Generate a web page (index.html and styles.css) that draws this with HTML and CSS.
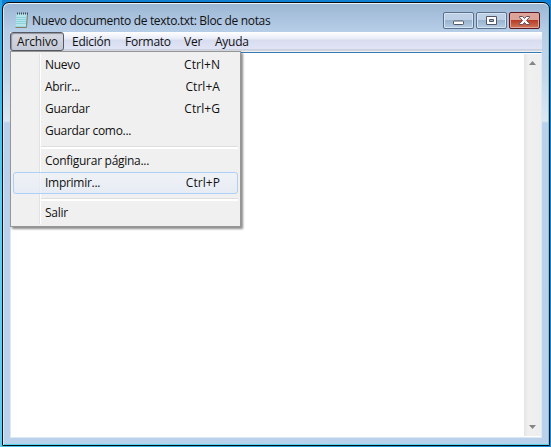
FILE: index.html
```
<!DOCTYPE html>
<html lang="es">
<head>
<meta charset="utf-8">
<title>Bloc de notas</title>
<link rel="stylesheet" href="styles.css">
</head>
<body>
<div class="window">
  <header class="titlebar">
    <svg class="icon" width="16" height="17" viewBox="0 0 16 17">
      <path d="M2.5 2H14L13 15.500H1.500Z" fill="#7fc4cf"/>
      <path d="M2.500 2H13L12 14.500H1.500Z" fill="#b4e5ec"/>
      <path d="M2.500 5.500H12.500M2.300 7.500H12.300M2.200 9.500H12.200M2 11.500H12" stroke="#83cbd7" stroke-width=".8"/>
      <path d="M13.500 2L12.500 14.500V15.500H1.500" fill="none" stroke="#8a8065"/>
      <path d="M3 1.500H14" stroke="#354d58" stroke-width="2" stroke-dasharray="1 1"/>
    </svg>
    <h1 class="title">Nuevo documento de texto.txt: Bloc de notas</h1>
    <div class="controls">
      <button class="control" aria-label="Minimizar"><svg width="29" height="15"><rect x="9.500" y="8" width="10" height="3.500" rx=".7" fill="#fff" stroke="#535666"/></svg></button>
      <button class="control" aria-label="Maximizar"><svg width="29" height="15"><path fill-rule="evenodd" d="M9.500 3.500h10v8h-10zM12.500 6.500v2h4v-2z" fill="#fff" stroke="#535666"/></svg></button>
      <button class="control close" aria-label="Cerrar"><svg width="29" height="15"><path d="M9.500 3.500h3.200l1.800 2 1.800-2h3.200v.8l-3 3.200 3 3.200v.8h-3.200l-1.800-2-1.800 2H9.500v-.8l3-3.200-3-3.200z" fill="#fff" stroke="#61505c"/></svg></button>
    </div>
  </header>
  <main class="client">
    <nav class="menubar">
      <span class="entry open">Archivo</span>
      <span class="entry edit">Edición</span>
      <span class="entry format">Formato</span>
      <span class="entry view">Ver</span>
      <span class="entry help">Ayuda</span>
    </nav>
    <div class="editor">
      <div class="paper"></div>
      <div class="scrollbar">
        <svg width="7" height="4"><path d="M0 4L3.500 0L7 4Z" fill="#858585"/></svg>
        <svg width="7" height="4"><path d="M0 0H7L3.500 4Z" fill="#858585"/></svg>
      </div>
    </div>
  </main>
  <div class="menu">
    <div class="item"><span>Nuevo</span><kbd>Ctrl+N</kbd></div>
    <div class="item"><span>Abrir...</span><kbd>Ctrl+A</kbd></div>
    <div class="item"><span>Guardar</span><kbd>Ctrl+G</kbd></div>
    <div class="item"><span>Guardar como...</span></div>
    <div class="separator"></div>
    <div class="item"><span>Configurar página...</span></div>
    <div class="item hover"><span>Imprimir...</span><kbd>Ctrl+P</kbd></div>
    <div class="separator"></div>
    <div class="item"><span>Salir</span></div>
  </div>
</div>
</body>
</html>
```
FILE: styles.css
```
* { box-sizing: border-box; }
body {
  margin: 0;
  height: 447px;
  padding: 2px 1px 1px 2px;
  overflow: hidden;
  background: linear-gradient(#25a5e6, #2fb4ea 60px, #5fd0f1 200px, #5ccdf0) 0 0 / 2px 100% no-repeat, linear-gradient(90deg, #4cc6e6, #1b8fd8) 0 100% / 100% 2px no-repeat, linear-gradient(#0f80d2, #1686d5);
  font: 12px/16px "Open Sans", "Noto Sans", sans-serif;
  color: #111;
}
.window {
  position: relative;
  height: 444px;
  display: flex;
  flex-direction: column;
  padding: 0 7px 7px;
  border: 1px solid #080d13;
  border-radius: 7px 7px 1px 1px;
  background: linear-gradient(#9bb5d2 0, #b6cde7 27px, #c4d8eb 74px, #dce8f3 118px, #b9d1ea 120px);
  box-shadow: inset 0 1px #eaf5fb, inset 1px 0 #d5eaf5, inset -1px -1px #54d4f1;
}
.titlebar {
  height: 29px;
  flex: none;
  display: flex;
  align-items: flex-start;
  padding: 8px 2px 0 4px;
}
.icon { margin-top: 1px; }
.title {
  flex: 1;
  margin: 1px 0 0 2px;
  font-size: 12px;
  line-height: 17px;
  font-weight: 400;
  white-space: nowrap;
  letter-spacing: -.33px;
}
.controls { display: flex; gap: 2px; margin-top: 1px; }
.control {
  width: 31px;
  height: 17px;
  padding: 0;
  border: 1px solid #59708c;
  border-radius: 2px;
  background: linear-gradient(#bdd0e5 0 45%, #9ab4cf 50%, #b5cde4);
  box-shadow: inset 0 0 0 1px #d5e3f1;
}
.control svg { display: block; }
.close {
  border-color: #5b1822;
  background: linear-gradient(#dda298 0 45%, #b83d29 50%, #cf7758);
  box-shadow: inset 0 0 0 1px #e0a89d;
}
.client { flex: 1; display: flex; flex-direction: column; }
.menubar {
  height: 20px;
  display: flex;
  background: linear-gradient(#fff, #e7ebf7 7px, #d7dcef 8px, #e0e4f5 17px, #b6bccc 18px, #f0f0f0 19px);
}
.entry { height: 19px; line-height: 20px; padding-left: 8px; letter-spacing: -.25px; }
.open {
  width: 54px;
  padding-left: 6px;
  border: 1px solid #555963;
  border-radius: 3px;
  line-height: 18px;
  letter-spacing: -.15px;
  background: linear-gradient(#d8dae1, #c5c9d7);
  box-shadow: inset 1px 1px 1px #8f929c;
}
.edit { width: 53px; }
.format { width: 59px; }
.view { width: 31px; }
.editor {
  flex: 1;
  display: flex;
  background: #fff;
  border: 1px solid #dce9f5;
  border-top-color: #347bb7;
}
.paper { flex: 1; }
.scrollbar {
  width: 17px;
  margin: 1px 0;
  padding: 7px 5px;
  display: flex;
  flex-direction: column;
  justify-content: space-between;
  background: linear-gradient(90deg, #e4e4e4, #f0f0f0 4px, #eee);
}
.menu {
  position: absolute;
  left: 7px;
  top: 48px;
  width: 231px;
  height: 176px;
  padding: 2px;
  border: 1px solid #969696;
  background: linear-gradient(90deg, transparent 28px, #e1e2e3 28px 29px, #fff 29px 30px, transparent 30px) 0 2px / 100% 170px no-repeat, #f0f0f0;
  box-shadow: 2px 2px 2px #555a;
}
.item {
  height: 22px;
  display: flex;
  justify-content: space-between;
  padding: 0 17px 0 31px;
  border: 1px solid transparent;
  border-radius: 3px;
  line-height: 20px;
  letter-spacing: -.28px;
  white-space: nowrap;
}
.item kbd { font: inherit; letter-spacing: .05px; }
.hover { border-color: #aecff7; background: linear-gradient(#eff3f899, #e4ebf6cc); }
.separator { height: 8px; padding-top: 4px; }
.separator::before { content: ""; display: block; height: 2px; margin-left: 28px; border-top: 1px solid #dedede; background: #fff; }
```
